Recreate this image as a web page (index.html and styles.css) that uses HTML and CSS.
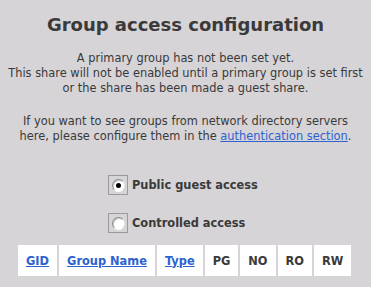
FILE: index.html
```html
<!DOCTYPE html>
<html lang="en">
  <head>
    <meta charset="UTF-8" />
    <title>Group access configuration</title>
    <link rel="stylesheet" href="styles.css">
  </head>
  <body>
    <div class="page">
      <h1>Group access configuration</h1>
      <p class="note">
        A primary group has not been set yet.<br />
        This share will not be enabled until a primary group is set first<br />
        or the share has been made a guest share.
      </p>
      <p class="note">
        If you want to see groups from network directory servers<br />
        here, please configure them in the <a href="#">authentication section</a>.
      </p>

      <div class="choices">
        <label class="choice">
          <span class="radio-box"><input type="radio" name="access" checked /></span>
          Public guest access
        </label>
        <label class="choice">
          <span class="radio-box"><input type="radio" name="access" /></span>
          Controlled access
        </label>
      </div>

      <table class="groups">
        <tr>
          <th><a href="#">GID</a></th>
          <th><a href="#">Group Name</a></th>
          <th><a href="#">Type</a></th>
          <th>PG</th>
          <th>NO</th>
          <th>RO</th>
          <th>RW</th>
        </tr>
      </table>
    </div>
  </body>
</html>
```

FILE: styles.css
```css
body {
  margin: 0;
  background: #d6d4d7;
  font-family: "DejaVu Sans", Verdana, sans-serif;
  font-size: 11.4px;
  color: #3a3a3a;
}

.page {
  width: 371px;
  text-align: center;
}

h1 {
  margin: 0;
  padding-top: 12px;
  font-size: 18px;
  font-weight: bold;
  line-height: 26px;
  color: #3a3a3a;
}

.note {
  margin: 13px 0 0;
  line-height: 15px;
}

.note + .note {
  margin-top: 18px;
}

a {
  color: #2d62cf;
}

.choices {
  margin: 31px 0 0 108px;
  display: flex;
  flex-direction: column;
  align-items: flex-start;
  gap: 18px;
}

.choice {
  display: flex;
  align-items: center;
  gap: 4px;
  font-weight: bold;
}

.radio-box {
  width: 18px;
  height: 18px;
  border: 1px solid #9a999b;
  display: flex;
  align-items: center;
  justify-content: center;
}

.radio-box input {
  appearance: none;
  margin: 0;
  width: 13px;
  height: 13px;
  border-radius: 50%;
  background: #fff;
  border: 1px solid;
  border-color: #8a8a8a #e6e6e6 #ffffff #8a8a8a;
  box-shadow: inset 1px 1px 0 #c8c8c8;
  position: relative;
}

.radio-box input:checked::after {
  content: "";
  position: absolute;
  left: 3px;
  top: 3px;
  width: 5px;
  height: 5px;
  border-radius: 50%;
  background: #000;
}

.groups {
  margin: 10px 0 0 16px;
  border-spacing: 2px;
}

.groups th {
  background: #fff;
  height: 31px;
  padding: 0 8px;
  font-weight: bold;
  white-space: nowrap;
}

.groups th a {
  color: #2d62cf;
}
```
